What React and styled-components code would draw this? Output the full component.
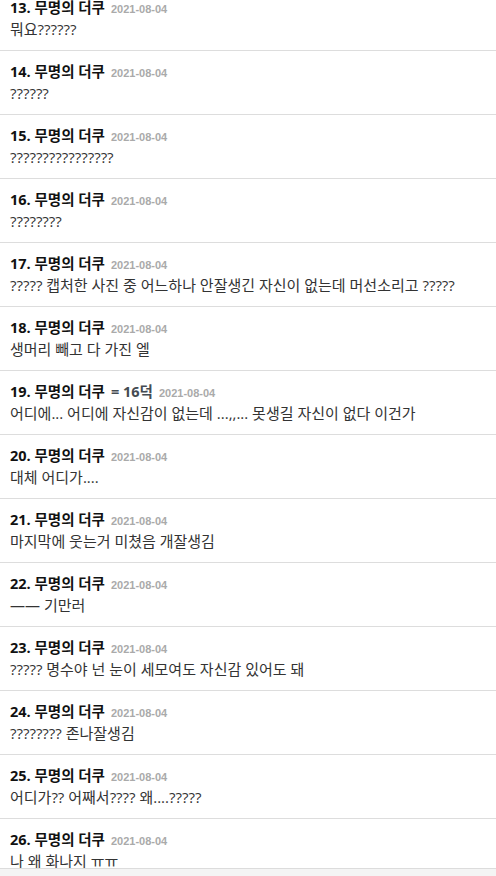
import React from "react";
import styled, { createGlobalStyle } from "styled-components";

const GlobalStyle = createGlobalStyle`
  html, body {
    margin: 0;
    padding: 0;
    background: #fff;
    overflow: hidden;
  }
  body {
    font-family: "Open Sans", "Noto Sans CJK KR", sans-serif;
  }
`;

const Page = styled.div`
  width: 496px;
  height: 876px;
  overflow: hidden;
  position: relative;
`;

const List = styled.ul`
  list-style: none;
  margin: -14px 0 0;
  padding: 0;
`;

const Item = styled.li`
  border-top: 1px solid #dddddd;
  padding: 11px 10px 10px;
  box-sizing: border-box;
  height: 64px;
`;

const Head = styled.div`
  display: flex;
  align-items: baseline;
  height: 20px;
  line-height: 20px;
  white-space: nowrap;
`;

const Name = styled.span`
  font-size: 14.5px;
  font-weight: 700;
  color: #111;
`;

const Extra = styled.span`
  font-size: 14.5px;
  font-weight: 700;
  color: #444b52;
  margin-left: 6px;
`;

const Date = styled.span`
  font-family: "Liberation Sans", Arial, sans-serif;
  font-size: 11px;
  font-weight: 700;
  color: #aaaaaa;
  margin-left: 6px;
`;

const Body = styled.div`
  font-size: 15px;
  line-height: 23px;
  color: #333;
  white-space: nowrap;
`;

const BottomBar = styled.div`
  position: fixed;
  left: 0;
  right: 0;
  bottom: 0;
  height: 7px;
  background: #f4f4f4;
  border-top: 1px solid #dcdcdc;
`;

const comments = [
  { n: 13, text: "뭐요??????" },
  { n: 14, text: "??????" },
  { n: 15, text: "????????????????" },
  { n: 16, text: "????????" },
  { n: 17, text: "????? 캡처한 사진 중 어느하나 안잘생긴 자신이 없는데 머선소리고 ?????" },
  { n: 18, text: "생머리 빼고 다 가진 엘" },
  { n: 19, extra: "= 16덕", text: "어디에... 어디에 자신감이 없는데 ...,,... 못생길 자신이 없다 이건가" },
  { n: 20, text: "대체 어디가...." },
  { n: 21, text: "마지막에 웃는거 미쳤음 개잘생김" },
  { n: 22, text: "—— 기만러" },
  { n: 23, text: "????? 명수야 넌 눈이 세모여도 자신감 있어도 돼" },
  { n: 24, text: "???????? 존나잘생김" },
  { n: 25, text: "어디가?? 어째서???? 왜....?????" },
  { n: 26, text: "나 왜 화나지 ㅠㅠ" },
];

export default function App() {
  return (
    <Page>
      <GlobalStyle />
      <List>
        {comments.map((c) => (
          <Item key={c.n}>
            <Head>
              <Name>{c.n}. 무명의 더쿠</Name>
              {c.extra && <Extra>{c.extra}</Extra>}
              <Date>2021-08-04</Date>
            </Head>
            <Body>{c.text}</Body>
          </Item>
        ))}
      </List>
      <BottomBar />
    </Page>
  );
}
